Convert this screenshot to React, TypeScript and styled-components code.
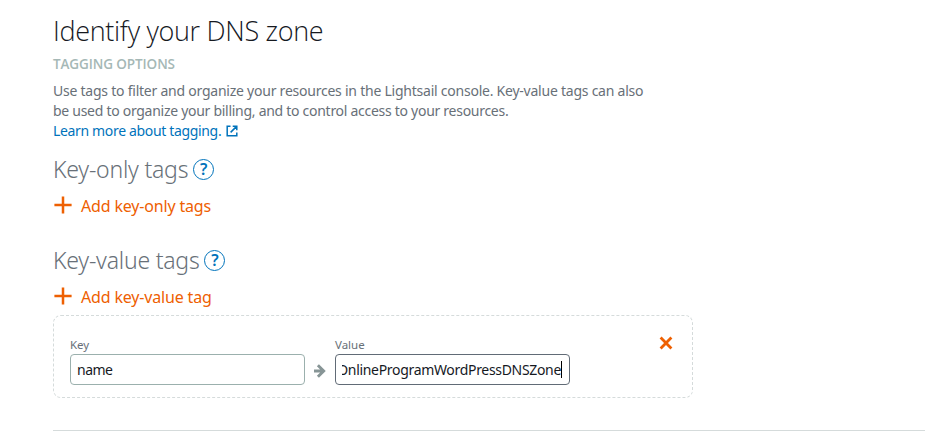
import React from 'react';
import styled, { createGlobalStyle } from 'styled-components';

const GlobalStyle = createGlobalStyle`
  *, *::before, *::after { box-sizing: border-box; }
  body {
    margin: 0;
    background: #fff;
    color: #16191f;
    font-family: "Noto Sans", "Open Sans", sans-serif;
  }
`;

const Page = styled.main`
  height: 431px;
  margin: 0 6px 0 53px;
  padding-top: 12px;
  border-bottom: 1px solid #d5dbdb;
`;

const Title = styled.h1`
  margin: 0;
  font-family: "Open Sans", sans-serif;
  font-size: 27px;
  font-weight: 300;
  line-height: 37px;
  letter-spacing: -0.32px;
  white-space: nowrap;
`;

const Eyebrow = styled.h2`
  margin: 0 0 2px;
  color: #a5b8b6;
  font-family: "Open Sans", sans-serif;
  font-size: 13.5px;
  font-weight: 600;
  line-height: 30px;
  letter-spacing: -0.1px;
  text-transform: uppercase;
`;

const Description = styled.p`
  width: 600px;
  margin: 0 0 9px;
  color: #687078;
  font-size: 14px;
  line-height: 20px;
`;

const Line = styled.span<{ $tracking: number }>`
  display: block;
  letter-spacing: ${(p) => p.$tracking}px;
  white-space: nowrap;
`;

const LearnMore = styled.a`
  display: flex;
  align-items: center;
  gap: 5px;
  color: #0073bb;
  letter-spacing: -0.34px;
  text-decoration: none;
`;

const Section = styled.section`
  height: 91px;
`;

const SectionHeader = styled.div`
  display: flex;
  align-items: center;
  gap: 5px;
  height: 38px;
`;

const SectionTitle = styled.h3`
  margin: 0;
  color: #687078;
  font-size: 23px;
  font-weight: 300;
  line-height: 38px;
  letter-spacing: -0.22px;
`;

const HelpButton = styled.button`
  display: flex;
  align-items: center;
  justify-content: center;
  width: 21px;
  height: 21px;
  padding: 0;
  border: 1px solid #0073bb;
  border-radius: 50%;
  background: none;
  color: #0073bb;
  font: 600 16px/19px "Noto Sans", sans-serif;
`;

const AddButton = styled.button`
  display: flex;
  align-items: center;
  gap: 9px;
  height: 34px;
  margin: 1px 0 0;
  padding: 0 0 0 1px;
  border: 0;
  background: none;
  color: #ee6002;
  font: 400 16px/34px "Noto Sans", sans-serif;
  letter-spacing: -0.17px;

  svg { margin-top: -2px; }
`;

const TagCard = styled.div`
  display: flex;
  align-items: flex-start;
  width: 640px;
  height: 83px;
  margin-top: -17px;
  padding: 20px 19px 0 16px;
  border: 1px dashed #d5dbdb;
  border-radius: 8px;
`;

const Field = styled.label`
  display: block;
  width: 235px;
`;

const FieldLabel = styled.span`
  display: block;
  height: 18px;
  color: #687078;
  font-size: 11.5px;
  line-height: 18px;
`;

const FieldBox = styled.span<{ $focused?: boolean }>`
  display: flex;
  height: 31px;
  padding: 0 7px 0 6px;
  border: 1px solid ${(p) => (p.$focused ? '#616b76' : '#9bb0ad')};
  border-radius: 4px;
  color: #16191f;
  font-size: 14px;
  line-height: 29px;
`;

const FieldText = styled.span<{ $toEnd?: boolean }>`
  display: flex;
  flex: 1;
  align-items: center;
  justify-content: ${(p) => (p.$toEnd ? 'flex-end' : 'flex-start')};
  overflow: hidden;
  letter-spacing: ${(p) => (p.$toEnd ? -0.32 : -0.5)}px;
  white-space: nowrap;
`;

const Caret = styled.span`
  flex: none;
  width: 1px;
  height: 17px;
  background: #000;
`;

const ArrowCell = styled.span`
  display: flex;
  width: 30px;
  padding: 28px 0 0 8px;
`;

const RemoveButton = styled.button`
  display: flex;
  margin: 0 0 0 auto;
  padding: 0;
  border: 0;
  background: none;
`;

const PlusIcon = () => (
  <svg width="18" height="18" viewBox="0 0 18 18" fill="none" stroke="#ee6002" strokeWidth="2.5">
    <path d="M9 .4v17.2M.4 9h17.2" />
  </svg>
);

const ExternalIcon = () => (
  <svg width="12" height="12" viewBox="0 0 12 12" fill="none" stroke="#0073bb" strokeWidth="1.5">
    <path d="M4.5 1.2H1.2v9.6h9.6V7.5M6.7 1.2h4.1v4.1M10.6 1.4 4.6 7.4" />
  </svg>
);

const ArrowIcon = () => (
  <svg width="14" height="14" viewBox="0 0 14 14" fill="none" stroke="#879596" strokeWidth="2.9">
    <path d="M1 7h9.5M4.9 1.2 10.7 7l-5.8 5.8" />
  </svg>
);

const CloseIcon = () => (
  <svg width="14" height="14" viewBox="0 0 14 14" fill="none" stroke="#ee6002" strokeWidth="2.8">
    <path d="m1.6 1.6 10.8 10.8M12.4 1.6 1.6 12.4" />
  </svg>
);

export default function App() {
  return (
    <>
      <GlobalStyle />
      <Page>
        <Title>Identify your DNS zone</Title>
        <Eyebrow>Tagging options</Eyebrow>
        <Description>
          <Line $tracking={-0.235}>
            Use tags to filter and organize your resources in the Lightsail console. Key-value tags can also
          </Line>
          <Line $tracking={-0.28}>
            be used to organize your billing, and to control access to your resources.
          </Line>
          <LearnMore>
            Learn more about tagging.
            <ExternalIcon />
          </LearnMore>
        </Description>

        <Section>
          <SectionHeader>
            <SectionTitle>Key-only tags</SectionTitle>
            <HelpButton>?</HelpButton>
          </SectionHeader>
          <AddButton>
            <PlusIcon />
            Add key-only tags
          </AddButton>
        </Section>

        <Section>
          <SectionHeader>
            <SectionTitle>Key-value tags</SectionTitle>
            <HelpButton>?</HelpButton>
          </SectionHeader>
          <AddButton>
            <PlusIcon />
            Add key-value tag
          </AddButton>
        </Section>

        <TagCard>
          <Field>
            <FieldLabel>Key</FieldLabel>
            <FieldBox>
              <FieldText>name</FieldText>
            </FieldBox>
          </Field>
          <ArrowCell>
            <ArrowIcon />
          </ArrowCell>
          <Field>
            <FieldLabel>Value</FieldLabel>
            <FieldBox $focused>
              <FieldText $toEnd>
                OnlineProgramWordPressDNSZone
                <Caret />
              </FieldText>
            </FieldBox>
          </Field>
          <RemoveButton>
            <CloseIcon />
          </RemoveButton>
        </TagCard>
      </Page>
    </>
  );
}
